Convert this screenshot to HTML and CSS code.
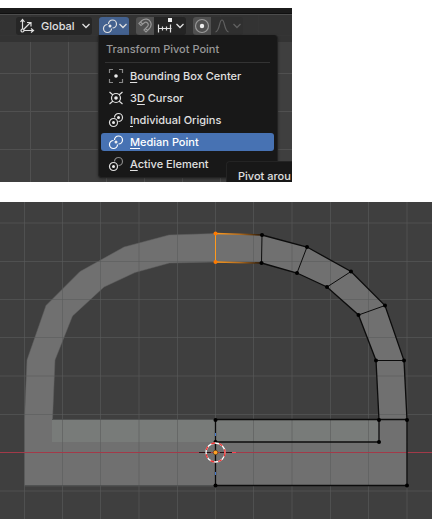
FILE: index.html
```
<!DOCTYPE html>
<html lang="en">
  <head>
    <meta charset="utf-8" />
    <meta name="viewport" content="width=device-width, initial-scale=1.0" />
    <title>Transform Pivot Point</title>
    <link rel="stylesheet" href="styles.css">
  </head>
  <body>
    <section class="editor">
      <div class="editor__edge"></div>
      <header class="toolbar">
        <label class="field">
          <svg class="icon" viewBox="0 0 16 16" aria-hidden="true">
            <path d="M3.500 2v10.500H14M1.500 4l2-2.500 2 2.500M12 10.500l2.500 2-2.500 2M3.500 12.500l8-8M8 4.500h4v4" />
            <circle cx="3.500" cy="12.500" r="1.500" fill="#2a2a2a" />
          </svg>
          <select class="field__select" aria-label="Transform orientation">
            <option>Global</option>
          </select>
          <svg class="chevron" viewBox="0 0 10 10" aria-hidden="true"><path d="M1.500 3l3.500 3.500 3.500-3.500" /></svg>
        </label>

        <div class="pivot">
          <button class="button button--active" aria-label="Transform Pivot Point" aria-expanded="true">
            <svg class="icon" viewBox="0 0 16 16" aria-hidden="true">
              <path d="M6.500 6a4 4 0 1 1 4 4M5.500 6.500a4 4 0 1 0 4 4" />
              <circle class="icon__dot" cx="8" cy="8" r="1.500" />
            </svg>
            <svg class="chevron" viewBox="0 0 10 10" aria-hidden="true"><path d="M1.500 3l3.500 3.500 3.500-3.500" /></svg>
          </button>

          <div class="menu" role="menu" aria-label="Transform Pivot Point">
            <h1 class="menu__title">Transform Pivot Point</h1>
            <button class="menu__item" role="menuitem">
              <svg class="icon" viewBox="0 0 16 16" aria-hidden="true">
                <path class="icon__faint" d="M1.500 5V1.500H5M11 1.500h3.500V5M14.500 11v3.500H11M5 14.500H1.500V11" />
                <circle class="icon__dot" cx="8" cy="8" r="1.800" />
              </svg>
              <span><u>B</u>ounding Box Center</span>
            </button>
            <button class="menu__item" role="menuitem">
              <svg class="icon" viewBox="0 0 16 16" aria-hidden="true">
                <circle cx="8" cy="8" r="4.500" />
                <path d="M1.500 2l3.500 3M14.500 2L11 5M1.500 14L5 11M14.500 14L11 11" />
                <circle class="icon__dot" cx="8" cy="8" r="1.800" />
              </svg>
              <span>3<u>D</u> Cursor</span>
            </button>
            <button class="menu__item" role="menuitem">
              <svg class="icon" viewBox="0 0 16 16" aria-hidden="true">
                <path d="M6.500 5.500a4 4 0 1 1 4 4" />
                <circle cx="5.500" cy="10.500" r="4" />
                <circle class="icon__dot" cx="5.500" cy="10.500" r="1.500" />
                <circle class="icon__dot" cx="10.500" cy="5.500" r="1.500" />
              </svg>
              <span><u>I</u>ndividual Origins</span>
            </button>
            <button class="menu__item menu__item--active" role="menuitem">
              <svg class="icon" viewBox="0 0 16 16" aria-hidden="true">
                <path d="M6.500 6a4 4 0 1 1 4 4M5.500 6.500a4 4 0 1 0 4 4" />
                <circle class="icon__dot" cx="8" cy="8" r="1.500" />
              </svg>
              <span><u>M</u>edian Point</span>
            </button>
            <button class="menu__item" role="menuitem">
              <svg class="icon" viewBox="0 0 16 16" aria-hidden="true">
                <path class="icon__faint" d="M6.500 5.500a4 4 0 1 1 4 4" />
                <circle cx="5.500" cy="10.500" r="4" />
                <circle class="icon__dot" cx="5.500" cy="10.500" r="1.500" />
              </svg>
              <span><u>A</u>ctive Element</span>
            </button>
          </div>
        </div>

        <div class="group">
          <button class="button button--toggle" aria-label="Snap">
            <svg class="icon icon--muted" viewBox="0 0 16 16" aria-hidden="true">
              <path d="M2 5.500l3-3C8 0 12 1 13.500 4s.5 5-1.500 7l-3 3-2-2 3-3c1.500-1.500 1.500-3 .5-4s-2.500-1-3.500 0L4 7.500zM3.500 4l2 2M8.500 10.500l2 2" />
            </svg>
          </button>
          <button class="button button--wide" aria-label="Snap target">
            <svg class="icon" viewBox="0 0 16 16" aria-hidden="true">
              <path d="M1.500 6.500v8M1.500 10.500h13M5.500 8.500v4M9.500 8.500v4M13.500 6.500v8" />
              <path class="icon__dot" d="M11 0h4v4h-4z" />
            </svg>
            <svg class="chevron" viewBox="0 0 10 10" aria-hidden="true"><path d="M1.500 3l3.500 3.500 3.500-3.500" /></svg>
          </button>
        </div>

        <div class="group">
          <button class="button button--toggle" aria-label="Proportional editing">
            <svg class="icon icon--muted" viewBox="0 0 16 16" aria-hidden="true">
              <circle cx="8" cy="8" r="6.500" />
              <circle class="icon__dot" cx="8" cy="8" r="2.200" />
            </svg>
          </button>
          <button class="button button--wide button--off" aria-label="Falloff">
            <svg class="icon" viewBox="0 0 16 16" aria-hidden="true">
              <path d="M1.500 14C6 13 5 2 8 2s2 11 6.500 12" />
            </svg>
            <svg class="chevron" viewBox="0 0 10 10" aria-hidden="true"><path d="M1.500 3l3.500 3.500 3.500-3.500" /></svg>
          </button>
        </div>
      </header>
      <div class="tooltip" role="tooltip">Pivot arou</div>
    </section>

    <svg class="viewport" viewBox="0 0 432 317" role="img" aria-label="Mirrored arch mesh in edit mode">
      <defs>
        <linearGradient id="select-fade" gradientUnits="userSpaceOnUse" x1="216" y1="0" x2="262" y2="0">
          <stop offset="0" stop-color="#ff9a1c" />
          <stop offset="0.500" stop-color="#b87020" />
          <stop offset="1" stop-color="#201000" />
        </linearGradient>
      </defs>
      <rect width="432" height="317" fill="#3f3f3f" />

      <!-- mirrored half, without edges -->
      <path class="mesh-ghost" d="M216 31.500L169 33l-45 12-44 24.500-34 34L27 158l-2.500 60v66H216v-66H52.500L55 158l17.500-44 31.500-29 31-14.500 34.500-9.500L216 60z" />
      <!-- edited half -->
      <path class="mesh-face" d="M215 31.500l47 1.500 45 12 44 24.500 34 34 19 55 3 59.500v65.500H215v-65.500h164l-3-59.500-17.500-45.500-31.500-28-30-14-36-10-46-1z" />
      <path class="mesh-overlap" d="M52 218h327v22H52z" />

      <path class="grid" d="M24.500 0v317M62.500 0v317M100.500 0v317M139 0v317M177.500 0v317M215.500 0v317M253.500 0v317M292 0v317M330.500 0v317M368.500 0v317M407 0v317M0 21h432M0 59.500h432M0 97.500h432M0 135.500h432M0 174h432M0 212.500h432M0 289h432" />
      <path d="M52 217.500h163M24.500 283.500H215" stroke="#505252" />
      <path d="M0 250.500h432" stroke="#a23a49" />

      <path class="edge" d="M262 33l45 12 44 24.500 34 34 19 55 3 59.500v65.500H215.500M215.500 217.500H407M261.500 61l35.500 10 30 14 31.500 28 17.500 45.500 3 59.500v22H215.500M215.500 218v66" />
      <path class="edge edge--thin" d="M262 33l-.5 28M307 45l-10 26M351 69.500L327 85M385 103.500L358.500 113M404 158.500h-28" />
      <path d="M215.500 31.500L262 33M215.500 60l46 1" fill="none" stroke="url(#select-fade)" stroke-width="1.500" />
      <path d="M215.500 31.500V60" stroke="#ff9a1c" />

      <g class="vertex">
        <circle cx="262" cy="33" r="2" /><circle cx="307" cy="45" r="2" />
        <circle cx="351" cy="69.500" r="2" /><circle cx="385" cy="103.500" r="2" />
        <circle cx="404" cy="158.500" r="2" /><circle cx="407" cy="218" r="2" />
        <circle cx="407" cy="283.500" r="2" /><circle cx="261.500" cy="61" r="2" />
        <circle cx="297" cy="71" r="2" /><circle cx="327" cy="85" r="2" />
        <circle cx="358.500" cy="113" r="2" /><circle cx="376" cy="158.500" r="2" />
        <circle cx="379" cy="218" r="2" /><circle cx="379" cy="240" r="2" />
        <circle cx="215.500" cy="218" r="2" /><circle cx="215.500" cy="240" r="2" />
        <circle cx="215.500" cy="283.500" r="2" />
      </g>
      <g class="vertex vertex--selected">
        <circle cx="215.500" cy="31.500" r="2" /><circle cx="215.500" cy="60" r="2" />
      </g>

      <!-- 3D cursor and object origin -->
      <path d="M215.500 231v3M215.500 270v3" stroke="#4078d0" />
      <path d="M199 250.500h12M220 250.500h12" stroke="#2c1014" />
      <path d="M232 250.500h4" stroke="#ff4050" />
      <circle class="cursor" cx="215.500" cy="250.500" r="9.500" />
      <circle class="cursor cursor--dash" cx="215.500" cy="250.500" r="9.500" />
      <circle cx="215.500" cy="250.500" r="2.300" fill="#ffa126" stroke="#4a3010" stroke-width="0.600" />
    </svg>
  </body>
</html>
```
FILE: styles.css
```
* {
  box-sizing: border-box;
}
body {
  margin: 0;
  padding-top: 8px;
  background-color: #fff;
  color: #e0e0e0;
  font-family: Inter, sans-serif;
  font-size: 11px;
  font-weight: 500;
  line-height: 18px;
}
button,
select {
  margin: 0;
  padding: 0;
  border: 0;
  background: none;
  color: inherit;
  font: inherit;
}
svg {
  display: block;
}

.editor {
  position: relative;
  max-width: 292px;
  min-height: 174px;
  margin-bottom: 20px;
  overflow: hidden;
  background-color: #3f3f3f;
  background-image: linear-gradient(90deg, #505050 1px, transparent 1px),
    linear-gradient(#505050 1px, transparent 1px);
  background-position: 30px 27px;
  background-size: 38px 38px;
}
.editor__edge {
  height: 6px;
  background-color: #1b1b1b;
  border-bottom: 1px solid #101010;
}
.toolbar {
  display: flex;
  align-items: flex-start;
  gap: 7px;
  height: 28px;
  padding: 2px 16px;
  border-top: 1px solid #4c4c4c;
  background-color: rgba(50, 50, 50, 0.9);
}
.field,
.button {
  display: flex;
  align-items: center;
  height: 18px;
  border-radius: 3px;
  background-color: #262626;
}
.field {
  width: 76px;
  padding: 0 1px 0 3px;
  gap: 6px;
}
.field__select {
  flex: 1;
  min-width: 0;
  appearance: none;
}
.pivot {
  position: relative;
}
.button {
  justify-content: space-between;
  width: 30px;
  padding: 0 1px 0 3px;
}
.button--active {
  background-color: #43618f;
  border-radius: 3px 3px 0 0;
}
.group {
  display: flex;
}
.button--toggle {
  width: 18px;
  padding: 0 1px;
  border-radius: 3px 0 0 3px;
  background-color: #505050;
}
.button--wide {
  width: 32px;
  border-radius: 0 3px 3px 0;
  background-color: #242424;
}
.button--off {
  background-color: #303030;
  color: #606060;
}

.icon,
.chevron {
  flex: none;
  width: 16px;
  height: 16px;
  fill: none;
  stroke: currentColor;
  stroke-width: 1.2;
}
.chevron {
  width: 10px;
  height: 10px;
  stroke-width: 1.3;
}
.icon--muted {
  color: #999;
}
.icon__dot {
  fill: #eee;
  stroke: none;
}
.button--off .icon__dot {
  fill: currentColor;
}
.icon__faint {
  stroke: #888;
}

.menu {
  position: absolute;
  top: 18px;
  left: -1px;
  z-index: 1;
  display: flex;
  flex-direction: column;
  gap: 4px;
  width: 180px;
  padding: 5px 3px 4px 2px;
  border: 1px solid #232323;
  border-top: 0;
  border-radius: 0 4px 4px 4px;
  background-color: #181818;
  box-shadow: 0 1px 3px rgba(0, 0, 0, 0.4);
}
.menu__title {
  margin: 0 4px;
  padding: 0 1px 4px;
  border-bottom: 1px solid #333;
  color: #989898;
  font-size: 11px;
  font-weight: 500;
}
.menu__item {
  display: flex;
  align-items: center;
  gap: 6px;
  height: 18px;
  padding: 0 7px;
  border-radius: 3px;
  text-align: left;
}
.menu__item--active {
  background-color: #4772b3;
  color: #fff;
}
.menu__item u {
  text-underline-offset: 2px;
}
.tooltip {
  position: absolute;
  top: 153px;
  left: 226px;
  right: 0;
  z-index: 2;
  padding: 5px 0 6px 11px;
  border: 1px solid #242424;
  border-right: 0;
  border-radius: 4px 0 0 0;
  background-color: #181818;
  white-space: nowrap;
}

.viewport {
  width: 100%;
  height: auto;
}
.mesh-ghost,
.mesh-face {
  fill: #707070;
}
.mesh-ghost {
  stroke: #606060;
  stroke-width: 0.5;
}
.mesh-overlap {
  fill: #787b79;
}
.grid {
  fill: none;
  stroke: #5a5c5c;
  stroke-opacity: 0.6;
}
.edge {
  fill: none;
  stroke: #0c0c0c;
  stroke-width: 1.3;
}
.edge--thin {
  stroke-width: 1;
}
.vertex {
  fill: #000;
}
.vertex--selected {
  fill: #ff7a00;
}
.cursor {
  fill: none;
  stroke: #fff;
  stroke-width: 1.3;
}
.cursor--dash {
  stroke: #f03030;
  stroke-dasharray: 4 4;
}
```
